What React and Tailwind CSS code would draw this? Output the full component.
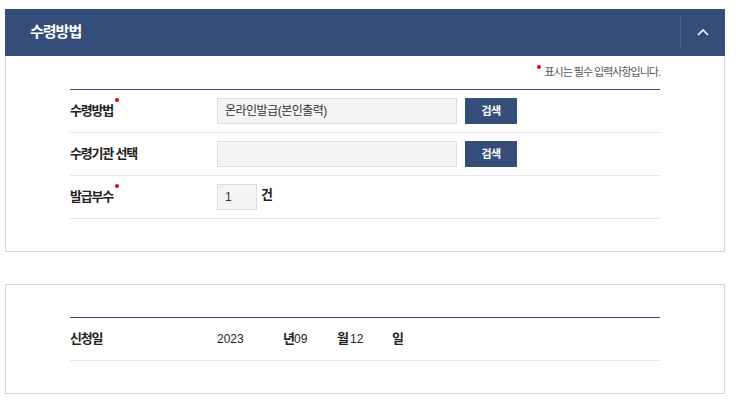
import React from 'react';

const font = { fontFamily: '"Liberation Sans", "Noto Sans CJK KR", sans-serif' };

function RequiredDot() {
  return <span className="inline-block w-[4px] h-[4px] rounded-full bg-[#e60012] ml-[2px] align-top relative top-[-3px]" />;
}

function Row({ label, required, children }) {
  return (
    <div className="flex items-center h-[43px] border-b border-[#e6e6e6]">
      <div className="w-[147px] text-[13px] font-bold text-[#222] tracking-[-1.2px]">
        {label}
        {required && <RequiredDot />}
      </div>
      <div className="flex items-center">{children}</div>
    </div>
  );
}

function SearchButton() {
  return (
    <button className="ml-[8px] w-[52px] h-[26px] bg-[#344d79] text-white text-[11px] font-bold tracking-[-0.5px]">
      검색
    </button>
  );
}

export default function App() {
  return (
    <div className="bg-white w-[738px] h-[401px] pt-[9px] px-[5px]" style={font}>
      {/* Section header */}
      <div className="w-[720px] h-[47px] bg-[#344d79] flex items-center">
        <h2 className="flex-1 pl-[25px] text-white text-[15px] font-bold tracking-[-1px]">수령방법</h2>
        <div className="w-[45px] h-[31px] border-l border-[#4a6290] flex items-center justify-center">
          <svg width="12" height="7" viewBox="0 0 12 7" fill="none">
            <polyline points="1,6 6,1 11,6" stroke="white" strokeWidth="1.6" />
          </svg>
        </div>
      </div>

      {/* Section body */}
      <div className="w-[720px] border border-t-0 border-[#d6d6d6] pl-[64px] pb-[32px]">
        <div className="w-[590px] h-[33px] flex items-center justify-end pb-[1px]">
          <span className="inline-block w-[4px] h-[4px] rounded-full bg-[#e60012] relative top-[-5px] mr-[3px]" />
          <span className="text-[11px] text-[#555] tracking-[-1px] leading-none">표시는 필수 입력사항입니다.</span>
        </div>
        <div className="w-[590px] border-t border-[#344d79]">
          <Row label="수령방법" required>
            <div className="w-[240px] h-[26px] bg-[#f4f4f4] border border-[#dcdcdc] flex items-center px-[7px] text-[12px] text-[#333] tracking-[-0.5px]">
              온라인발급(본인출력)
            </div>
            <SearchButton />
          </Row>
          <Row label="수령기관 선택">
            <div className="w-[240px] h-[26px] bg-[#f4f4f4] border border-[#dcdcdc]" />
            <SearchButton />
          </Row>
          <Row label="발급부수" required>
            <div className="w-[40px] h-[26px] bg-[#f4f4f4] border border-[#dcdcdc] flex items-center px-[7px] text-[12px] text-[#333]">
              1
            </div>
            <span className="ml-[4px] text-[13px] font-bold text-[#222] relative top-[-2px]">건</span>
          </Row>
        </div>
      </div>

      {/* Second panel */}
      <div className="mt-[32px] w-[720px] border border-[#d6d6d6] pl-[64px] pt-[32px] pb-[32px]">
        <div className="w-[590px] border-t border-[#344d79]">
          <Row label="신청일">
            <span className="w-[66px] text-[12px] text-[#222]">2023</span>
            <span className="w-[11px] text-[13px] font-bold text-[#222]">년</span>
            <span className="w-[43px] text-[12px] text-[#222]">09</span>
            <span className="w-[13px] text-[13px] font-bold text-[#222]">월</span>
            <span className="w-[42px] text-[12px] text-[#222]">12</span>
            <span className="text-[13px] font-bold text-[#222]">일</span>
          </Row>
        </div>
      </div>
    </div>
  );
}
